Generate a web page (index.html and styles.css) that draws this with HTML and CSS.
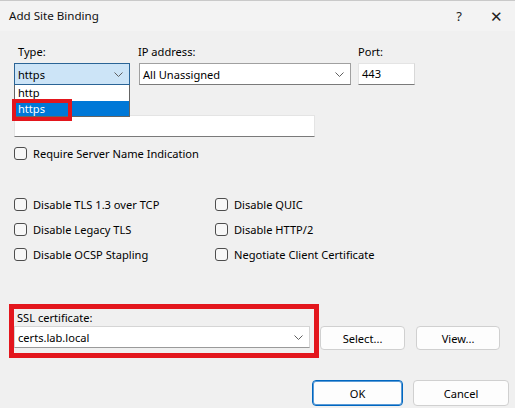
FILE: index.html
```html
<!DOCTYPE html>
<html>
<head>
<meta charset="utf-8">
<link rel="stylesheet" href="styles.css">
</head>
<body>
<div class="window">
  <div class="titlebar">
    <span class="title">Add Site Binding</span>
    <span class="tb-btns"><span class="help">?</span><span class="close">✕</span></span>
  </div>
  <div class="content">
    <div class="row1">
      <div class="col col-type">
        <label class="lbl lbl-type">Type:</label>
        <div class="select select-active">
          <span>https</span>
          <svg class="chev" width="9" height="5" viewBox="0 0 9 5"><path d="M0.5 0.5 L4.5 4.5 L8.5 0.5" fill="none" stroke="#5f5f5f" stroke-width="1"/></svg>
        </div>
        <div class="dropdown">
          <div class="opt">http</div>
          <div class="opt opt-sel">https</div>
          <div class="mark"></div>
        </div>
      </div>
      <div class="col col-ip">
        <label class="lbl">IP address:</label>
        <div class="select">
          <span>All Unassigned</span>
          <svg class="chev" width="9" height="5" viewBox="0 0 9 5"><path d="M0.5 0.5 L4.5 4.5 L8.5 0.5" fill="none" stroke="#5f5f5f" stroke-width="1"/></svg>
        </div>
      </div>
      <div class="col col-port">
        <label class="lbl">Port:</label>
        <div class="input port">443</div>
      </div>
    </div>
    <div class="input host"></div>
    <div class="check sni"><span class="cb"></span><span>Require Server Name Indication</span></div>
    <div class="grid">
      <div class="check"><span class="cb"></span><span>Disable TLS 1.3 over TCP</span></div>
      <div class="check"><span class="cb"></span><span>Disable QUIC</span></div>
      <div class="check"><span class="cb"></span><span>Disable Legacy TLS</span></div>
      <div class="check"><span class="cb"></span><span>Disable HTTP/2</span></div>
      <div class="check"><span class="cb"></span><span>Disable OCSP Stapling</span></div>
      <div class="check"><span class="cb"></span><span>Negotiate Client Certificate</span></div>
    </div>
    <div class="ssl-row">
      <div class="ssl-box">
        <label class="lbl lbl-ssl">SSL certificate:</label>
        <div class="select select-ssl">
          <span>certs.lab.local</span>
          <svg class="chev" width="9" height="5" viewBox="0 0 9 5"><path d="M0.5 0.5 L4.5 4.5 L8.5 0.5" fill="none" stroke="#5f5f5f" stroke-width="1"/></svg>
        </div>
      </div>
      <button class="btn btn-select">Select...</button>
      <button class="btn btn-view">View...</button>
    </div>
    <div class="footer">
      <button class="btn btn-ok">OK</button>
      <button class="btn btn-cancel">Cancel</button>
    </div>
  </div>
</div>
</body>
</html>
```
FILE: styles.css
```css
* { box-sizing: border-box; }
html, body { margin: 0; padding: 0; }
body {
  width: 515px;
  height: 408px;
  overflow: hidden;
  background: #f0f0f0;
  font-family: "Noto Sans", "Open Sans", sans-serif;
  font-size: 11.1px;
  color: #000;
}
.window { width: 515px; height: 408px; }
.titlebar {
  height: 31px;
  background: #f3f3f3;
  border-top: 1px solid #c9c9c9;
  display: flex;
  align-items: center;
  justify-content: space-between;
  padding: 0 12px 0 9px;
}
.title { font-size: 11.6px; color: #111; padding-bottom: 1px; }
.tb-btns { display: flex; align-items: center; gap: 28px; }
.help { font-size: 13px; color: #222; }
.close { font-size: 15px; color: #222; font-weight: 300; }
.content { padding: 0 0 0 14px; }
.row1 { display: flex; margin-top: 13px; }
.col { display: flex; flex-direction: column; position: relative; }
.lbl { height: 19px; line-height: 16px; display: block; }
.col-type { width: 116px; }
.lbl-type { padding-left: 4px; }
.col-ip { width: 212px; margin-left: 9px; }
.col-ip .lbl { margin-left: -1px; }
.col-port { width: 57px; margin-left: 7px; }
.select {
  height: 22px;
  border: 1px solid #a0a0a0;
  border-bottom-color: #7a7a7a;
  background: #fff;
  display: flex;
  align-items: center;
  justify-content: space-between;
  padding: 0 6px 0 3px;
}
.select-active {
  background: #cce4f7;
  border: 1px solid #2a6496;
}
.chev { flex: none; }
.input {
  height: 22px;
  background: #fff;
  border: 1px solid #e4e4e4;
  border-bottom: 1px solid #7a7a7a;
  padding: 2px 3px;
  line-height: 16px;
}
.port { border-right-color: #d8d8d8; }
.dropdown {
  position: absolute;
  left: 0;
  top: 41px;
  width: 116px;
  background: #fff;
  border: 1px solid #646464;
  border-top: none;
  z-index: 5;
}
.opt { height: 15px; line-height: 15px; padding-left: 3px; }
.opt:first-child { height: 16px; }
.opt-sel { background: #0078d7; color: #fff; }
.mark {
  position: absolute;
  left: -3px;
  top: 14px;
  width: 60px;
  height: 22px;
  border: 4px solid #e3161d;
}
.host { width: 301px; margin-top: 30px; }
.check { display: flex; align-items: center; gap: 6px; height: 25px; }
.cb {
  width: 13px;
  height: 13px;
  border: 1px solid #4d4d4d;
  border-radius: 3px;
  background: #f7f7f7;
  flex: none;
}
.sni { margin-top: 4px; }
.grid {
  display: grid;
  grid-template-columns: 201px 1fr;
  margin-top: 26px;
}
.ssl-row { display: flex; align-items: flex-end; margin-top: 37px; margin-left: -5px; }
.ssl-box {
  width: 310px;
  height: 54px;
  border: 5px solid #e3161d;
  padding: 1px 0 0 0;
}
.lbl-ssl { padding-left: 3px; height: 16px; }
.select-ssl { width: 296px; height: 22px; border-color: #d5d5d5; border-bottom-color: #9a9a9a; }
.btn {
  font-family: inherit;
  font-size: 11.1px;
  color: #000;
  background: #fdfdfd;
  border: 1px solid #d0d0d0;
  border-radius: 4px;
  height: 24px;
  padding: 0;
}
.btn-select { width: 85px; margin-left: 1px; margin-bottom: 8px; }
.btn-view { width: 84px; margin-left: 11px; margin-bottom: 8px; }
.footer { display: flex; justify-content: flex-end; gap: 10px; margin-top: 22px; padding-right: 6px; }
.btn-ok { width: 91px; height: 26px; border: 1px solid #0067c0; box-shadow: inset 0 0 0 1px #5a9ad6; }
.btn-cancel { width: 96px; height: 26px; }
```
